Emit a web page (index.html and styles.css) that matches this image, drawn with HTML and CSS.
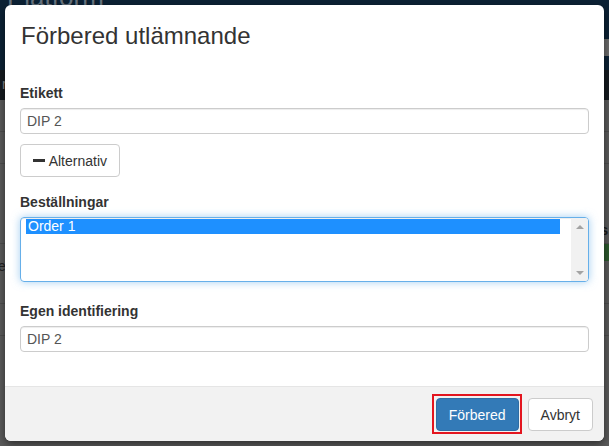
FILE: index.html
```html
<!DOCTYPE html>
<html lang="sv">
<head>
<meta charset="utf-8">
<title>Förbered utlämnande</title>
<link rel="stylesheet" href="styles.css">
</head>
<body>
<div class="page">
  <header class="topbar">
    <span class="brand">Platform</span>
    <span class="top-chip">0</span>
  </header>
  <div class="subbar"><span class="sub-text">r</span></div>
  <div class="content">
    <div class="row"></div>
    <div class="row"></div>
    <div class="row row-s"><span class="row-s-text">s</span></div>
    <div class="row row-green"><span class="row-e">e.</span><span class="green"></span></div>
    <div class="row"></div>
  </div>
</div>

<div class="backdrop">
  <div class="modal">
    <div class="modal-header">
      <h4 class="modal-title">Förbered utlämnande</h4>
    </div>
    <div class="modal-body">
      <div class="form-group">
        <label class="label">Etikett</label>
        <div class="input">DIP 2</div>
      </div>
      <button class="btn btn-default btn-alt" type="button"><span class="minus"></span>Alternativ</button>
      <div class="form-group fg-orders">
        <label class="label">Beställningar</label>
        <div class="listbox">
          <div class="options">
            <div class="option selected">Order 1</div>
          </div>
          <div class="scrollbar">
            <span class="arrow arrow-up"></span>
            <span class="arrow arrow-down"></span>
          </div>
        </div>
      </div>
      <div class="form-group fg-own">
        <label class="label">Egen identifiering</label>
        <div class="input">DIP 2</div>
      </div>
    </div>
    <div class="modal-footer">
      <button class="btn btn-primary focused" type="button">Förbered</button>
      <button class="btn btn-default" type="button">Avbryt</button>
    </div>
  </div>
</div>
</body>
</html>
```
FILE: styles.css
```css
* { box-sizing: border-box; }
html, body { margin: 0; padding: 0; }
body {
  width: 609px;
  height: 446px;
  overflow: hidden;
  background: #5b5b5b;
  font-family: "Liberation Sans", Arial, Helvetica, sans-serif;
  font-size: 14px;
  color: #333;
  position: relative;
}

/* page behind the dialog (already dimmed) */
.page { display: flex; flex-direction: column; }
.topbar {
  height: 70px;
  background: #0c2235;
  display: flex;
  justify-content: space-between;
  align-items: flex-start;
  padding: 0 0 0 7px;
}
.brand {
  font-size: 26px;
  line-height: 20px;
  margin-top: -13px;
  color: #6a7580;
}
.top-chip {
  margin-top: 39px;
  width: 20px;
  height: 17px;
  background: #6b6b6b;
  color: #222;
  font-size: 12px;
  line-height: 17px;
  padding-left: 6px;
}
.subbar {
  height: 30px;
  background: #161b20;
  padding-left: 2px;
}
.sub-text { color: #888; font-size: 14px; line-height: 28px; }
.content { display: flex; flex-direction: column; }
.row {
  height: 32px;
  border-bottom: 1px solid #4e4e4e;
  position: relative;
}
.row-s { height: 80px; }
.row-s-text {
  position: absolute;
  right: 1px;
  top: 58px;
  font-weight: bold;
  color: #1a1a1a;
}
.row-green { height: 60px; }
.row-e { position: absolute; left: -2px; top: 14px; color: #222; }
.green {
  position: absolute;
  right: 0;
  top: 0;
  width: 6px;
  height: 17px;
  background: #2d5a2e;
}

/* dialog */
.backdrop {
  position: absolute;
  inset: 0;
  padding: 5px 0 0 5px;
}
.modal {
  width: 599px;
  background: #fff;
  border-radius: 6px;
  overflow: hidden;
  box-shadow: 0 3px 9px rgba(0,0,0,.5);
}
.modal-header { padding: 18px 15px 15px 16px; }
.modal-title {
  margin: 0;
  font-size: 24px;
  line-height: 26px;
  font-weight: normal;
  color: #333;
}
.modal-body { padding: 19px 15px 34px 15px; }
.form-group { display: flex; flex-direction: column; }
.label {
  font-weight: bold;
  line-height: 20px;
  margin-bottom: 5px;
}
.input {
  height: 26px;
  border: 1px solid #ccc;
  border-radius: 4px;
  padding: 2px 6px;
  line-height: 20px;
  color: #555;
  box-shadow: inset 0 1px 1px rgba(0,0,0,.075);
}
.btn {
  font-family: inherit;
  font-size: 14px;
  line-height: 20px;
  padding: 6px 12px;
  border-radius: 4px;
  border: 1px solid #ccc;
  background: #fff;
  color: #333;
  height: 33px;
  cursor: pointer;
  position: relative;
}
.btn-alt {
  margin-top: 10px;
  width: 100px;
  display: flex;
  align-items: center;
  padding-left: 12px;
}
.minus {
  display: inline-block;
  width: 12px;
  height: 3px;
  background: #333;
  margin-right: 4px;
}
.fg-orders { margin-top: 15px; }
.listbox {
  height: 65px;
  border: 1px solid #66afe9;
  border-radius: 4px;
  box-shadow: inset 0 1px 1px rgba(0,0,0,.075), 0 0 8px rgba(102,175,233,.6);
  display: flex;
  padding: 1px 0 1px 5px;
  overflow: hidden;
}
.options { flex: 1; padding-right: 11px; }
.option {
  line-height: 15px;
  padding: 0 2px;
  color: #333;
}
.option.selected { background: #1e90ff; color: #fff; }
.scrollbar {
  width: 17px;
  background: #f1f1f1;
  margin: -1px 0 -1px 0;
  display: flex;
  flex-direction: column;
  justify-content: space-between;
  align-items: center;
  padding: 7px 0 6px;
}
.arrow { width: 0; height: 0; border-left: 4px solid transparent; border-right: 4px solid transparent; }
.arrow-up { border-bottom: 4px solid #a3a3a3; }
.arrow-down { border-top: 4px solid #a3a3a3; }
.fg-own { margin-top: 19px; }

.modal-footer {
  background: #f2f2f2;
  border-top: 1px solid #e5e5e5;
  padding: 11px 11px 10px;
  display: flex;
  justify-content: flex-end;
  gap: 9px;
}
.btn-primary {
  background: #337ab7;
  border-color: #2e6da4;
  color: #fff;
}
.focused::after {
  content: "";
  position: absolute;
  inset: -5px -4px -4px -5px;
  border: 2px solid #e3151f;
}
```
